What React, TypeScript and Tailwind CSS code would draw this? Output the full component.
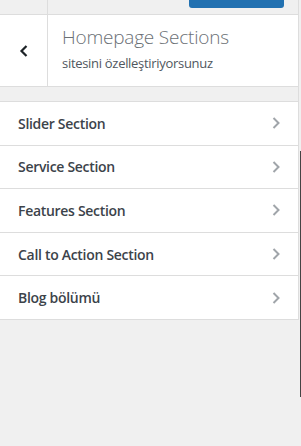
import React from "react";

const items = [
  "Slider Section",
  "Service Section",
  "Features Section",
  "Call to Action Section",
  "Blog bölümü",
];

function Chevron() {
  return (
    <svg width="10" height="14" viewBox="0 0 10 14" className="shrink-0">
      <path d="M2.5 2 L7.5 7 L2.5 12" fill="none" stroke="#a0a5aa" strokeWidth="2" />
    </svg>
  );
}

export default function App() {
  return (
    <div
      className="relative w-[301px] h-[446px] bg-[#f0f0f0] overflow-hidden"
      style={{ fontFamily: '"Open Sans", "Noto Sans", sans-serif' }}
    >
      <div className="w-[299px] border-r border-[#dddddd]">
        {/* top bar */}
        <div className="h-[15px] flex border-b border-[#dddddd] bg-[#f0f0f0]">
          <div className="w-[48px] border-r border-[#dddddd]" />
          <div className="flex-1 relative">
            <div className="absolute left-[141px] top-0 w-[95px] h-[8px] bg-[#2271b1] rounded-b-[3px]" />
          </div>
        </div>
        {/* header */}
        <div className="h-[72px] flex bg-white border-b border-[#dddddd]">
          <div className="w-[48px] border-r border-[#dddddd] flex items-center justify-center">
            <svg width="10" height="14" viewBox="0 0 10 14">
              <path d="M7.5 2 L2.5 7 L7.5 12" fill="none" stroke="#1d2327" strokeWidth="2.2" />
            </svg>
          </div>
          <div className="flex-1 pl-[14px] pt-[9px]">
            <div className="text-[19px] leading-[26px] font-light text-[#6b7075] tracking-[-0.2px]">
              Homepage Sections
            </div>
            <div className="text-[13px] leading-[20px] mt-[3px] text-[#50575e] tracking-[-0.3px]">
              sitesini özelleştiriyorsunuz
            </div>
          </div>
        </div>
        {/* list */}
        <div className="mt-[14px] border-t border-[#dddddd] bg-white">
          {items.map((t) => (
            <div
              key={t}
              className="h-[43.6px] flex items-center justify-between pl-[18px] pr-[17px] border-b border-[#dddddd]"
            >
              <span className="text-[14px] font-semibold text-[#3c434a] tracking-[-0.3px]">{t}</span>
              <Chevron />
            </div>
          ))}
        </div>
      </div>
      <div className="absolute right-0 top-[151px] w-[1px] h-[246px] bg-[#444444]" />
    </div>
  );
}
